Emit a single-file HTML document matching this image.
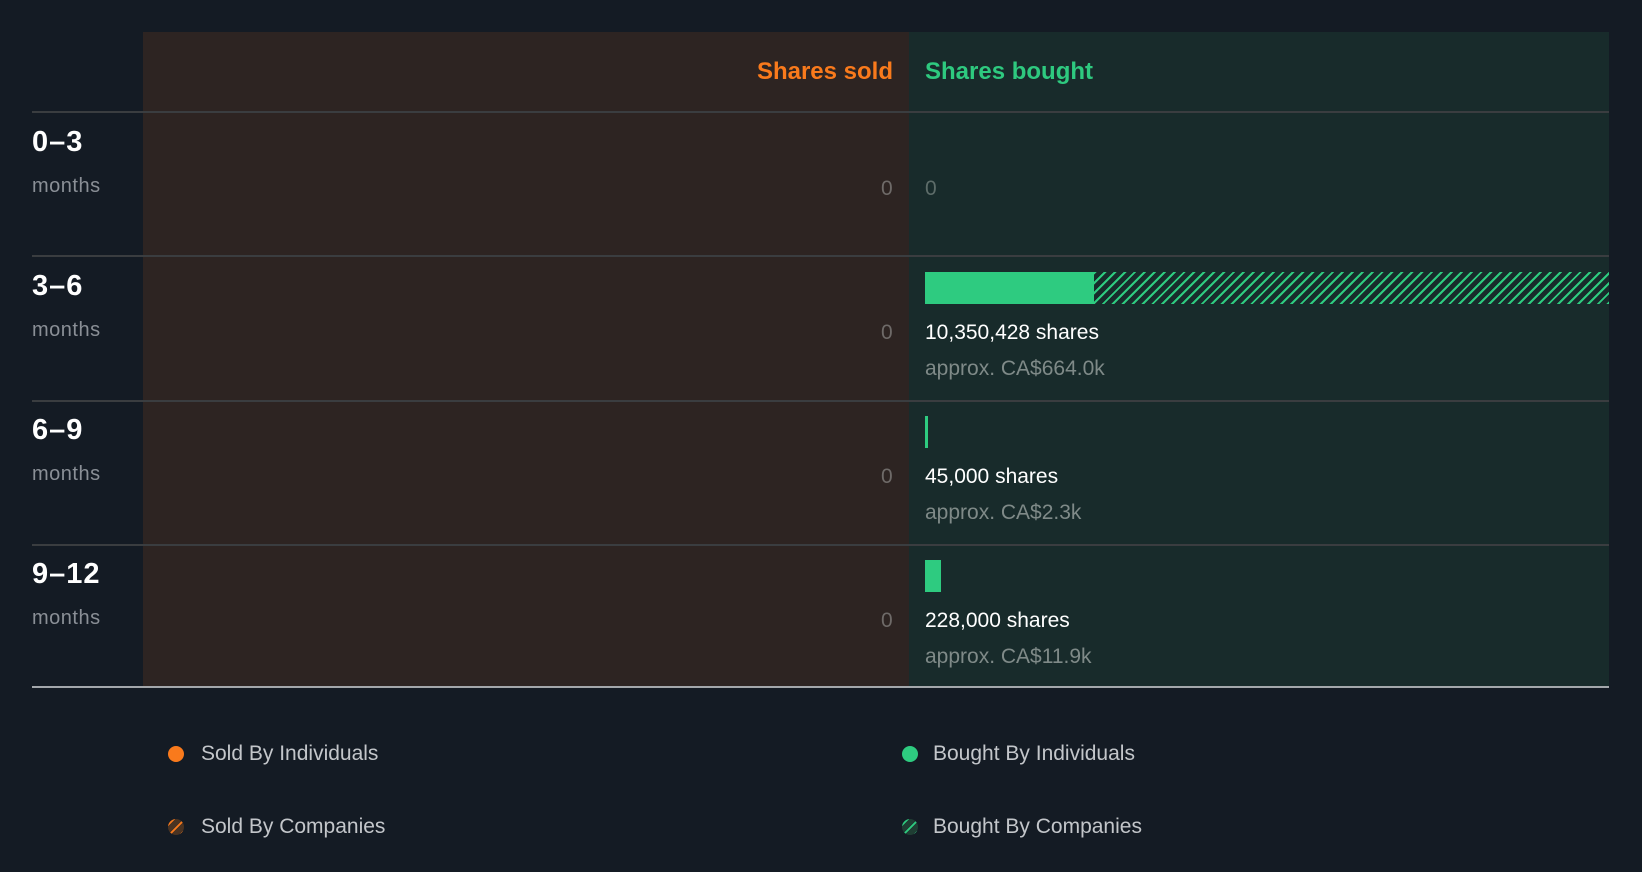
<!DOCTYPE html>
<html><head><meta charset="utf-8"><style>
*{margin:0;padding:0;box-sizing:border-box}
body{width:1642px;height:872px;background:#141b24;font-family:"Liberation Sans",Arial,sans-serif;position:relative;overflow:hidden}
.a{position:absolute;white-space:nowrap}
.l{background:#2d2422}
.r{background:#182b2b}
.line{position:absolute;height:2px;background:#3a3d40;left:32px;width:1577px}
.lab{position:absolute;left:32px;font-weight:bold;font-size:29px;color:#fff;letter-spacing:1px}
.mo{position:absolute;left:32px;font-size:20px;color:#8a8f96;letter-spacing:0.5px}
.z{position:absolute;font-size:21px;color:#6e6a68}
.sh{position:absolute;left:925px;font-size:21px;color:#fff}
.ap{position:absolute;left:925px;font-size:21px;color:#7f8a88}
.lg{position:absolute;font-size:21px;color:#c3c6ca}
.dot{position:absolute;width:16px;height:16px;border-radius:50%}
</style></head><body>
<div class="a l" style="left:143px;top:32px;width:766px;height:655px"></div>
<div class="a r" style="left:909px;top:32px;width:700px;height:655px"></div>
<div class="a" style="right:749px;top:58px;font-size:24px;font-weight:bold;color:#f97a1c">Shares sold</div>
<div class="a" style="left:925px;top:58px;font-size:24px;font-weight:bold;color:#2ec97f">Shares bought</div>
<div class="line" style="top:111px"></div>
<div class="line" style="top:255px"></div>
<div class="line" style="top:400px"></div>
<div class="line" style="top:544px"></div>
<div class="line" style="top:686px;background:#a3a7ab"></div>

<div class="lab" style="top:126px">0–3</div><div class="mo" style="top:175px">months</div>
<div class="lab" style="top:270px">3–6</div><div class="mo" style="top:319px">months</div>
<div class="lab" style="top:414px">6–9</div><div class="mo" style="top:463px">months</div>
<div class="lab" style="top:558px">9–12</div><div class="mo" style="top:607px">months</div>

<div class="z" style="left:881px;top:177px">0</div>
<div class="z" style="left:925px;top:177px;color:#5d6c69">0</div>
<div class="z" style="left:881px;top:321px">0</div>
<div class="z" style="left:881px;top:465px">0</div>
<div class="z" style="left:881px;top:609px">0</div>

<div class="a" style="left:925px;top:272px;width:169px;height:32px;background:#2ecb80"></div>
<div class="a" style="left:1094px;top:272px;width:515px;height:32px;background:repeating-linear-gradient(135deg,#2ecb80 0 2px,transparent 2px 7px)"></div>
<div class="sh" style="top:321px">10,350,428 shares</div>
<div class="ap" style="top:357px">approx. CA$664.0k</div>

<div class="a" style="left:925px;top:416px;width:3px;height:32px;background:#2ecb80"></div>
<div class="sh" style="top:465px">45,000 shares</div>
<div class="ap" style="top:501px">approx. CA$2.3k</div>

<div class="a" style="left:925px;top:560px;width:16px;height:32px;background:#2ecb80"></div>
<div class="sh" style="top:609px">228,000 shares</div>
<div class="ap" style="top:645px">approx. CA$11.9k</div>

<div class="dot" style="left:168px;top:746px;background:#f97a1c"></div>
<div class="lg" style="left:201px;top:742px">Sold By Individuals</div>
<div class="dot" style="left:168px;top:819px;background:repeating-linear-gradient(135deg,#4a3322 0 3px,#f97a1c 3px 5px,#4a3322 5px 8px)"></div>
<div class="lg" style="left:201px;top:815px">Sold By Companies</div>
<div class="dot" style="left:902px;top:746px;background:#2ecb80"></div>
<div class="lg" style="left:933px;top:742px">Bought By Individuals</div>
<div class="dot" style="left:902px;top:819px;background:repeating-linear-gradient(135deg,#1f3d33 0 3px,#2ecb80 3px 5px,#1f3d33 5px 8px)"></div>
<div class="lg" style="left:933px;top:815px">Bought By Companies</div>
</body></html>
